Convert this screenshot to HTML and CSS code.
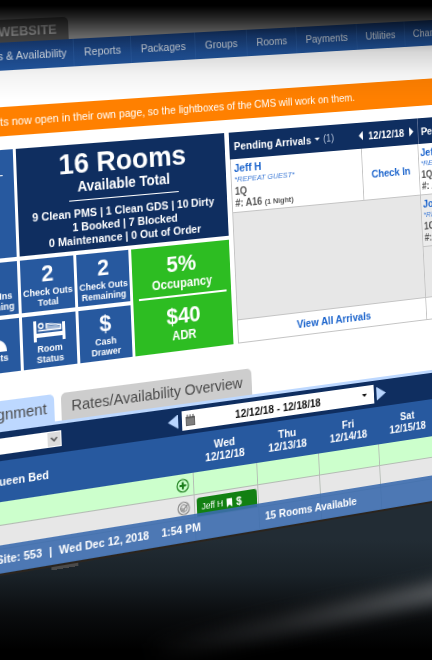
FILE: index.html
```html
<!DOCTYPE html>
<html lang="en">
<head>
<meta charset="utf-8">
<title>Property dashboard</title>
<link rel="stylesheet" href="styles.css">
</head>
<body>
<main class="stage">
  <div class="board">
    <div class="topbar"><a class="site-tab" href="#">WEBSITE</a></div>
    <nav class="nav">
      <a href="#">Rates &amp; Availability</a><a href="#">Reports</a><a href="#">Packages</a><a href="#">Groups</a><a href="#">Rooms</a><a href="#">Payments</a><a href="#">Utilities</a><a href="#">Channels</a>
    </nav>
    <p class="notice">Payments now open in their own page, so the lightboxes of the CMS will work on them.</p>

    <section class="panels">
      <div class="tiles">
        <div class="tile tile-side"><hr></div>
        <div class="tile summary">
          <h1>16 Rooms</h1>
          <h2>Available Total</h2>
          <hr>
          <p>9 Clean PMS | 1 Clean GDS | 10 Dirty<br>1 Booked | 7 Blocked<br>0 Maintenance | 0 Out of Order</p>
        </div>
        <div class="tile"><strong>2</strong><span>Check Ins<br>Remaining</span></div>
        <div class="tile"><strong>2</strong><span>Check Outs<br>Total</span></div>
        <div class="tile"><strong>2</strong><span>Check Outs<br>Remaining</span></div>
        <div class="tile rates">
          <strong>5%</strong><b>Occupancy</b>
          <hr>
          <strong>$40</strong><b>ADR</b>
        </div>
        <div class="tile guests">
          <svg class="icon-guest" viewBox="0 0 32 28" aria-hidden="true"><circle cx="16" cy="8" r="7"/><path d="M2 28c0-8 5-12 14-12s14 4 14 12z"/></svg>
          <span>Guests</span>
        </div>
        <div class="tile">
          <svg class="icon-bed" viewBox="0 0 32 20" aria-hidden="true"><path d="M0 0h3v12h26V3h3v17h-3v-4H3v4H0z"/><path d="M4.500 9.500h23V5.500L13 3.500V8" fill="none" stroke="#fff" stroke-width="1.400"/><path d="M13 5l14 1.500v3H13z" opacity=".55"/><circle cx="7.500" cy="5" r="2.300" fill="none" stroke="#fff" stroke-width="1.400"/></svg>
          <span>Room<br>Status</span>
        </div>
        <div class="tile"><strong>$</strong><span>Cash<br>Drawer</span></div>
      </div>

      <section class="list arrivals">
        <header>
          <h3>Pending Arrivals</h3><i class="caret"></i><span class="count">(1)</span>
          <button class="tri tri-left" aria-label="Previous day"></button>
          <time>12/12/18</time>
          <button class="tri tri-right" aria-label="Next day"></button>
        </header>
        <div class="entry">
          <div class="guest"><a href="#">Jeff H</a><em>*REPEAT GUEST*</em><b>1Q</b><b>#: A16 <small>(1 Night)</small></b></div>
          <a class="check" href="#">Check In</a>
        </div>
        <div class="empty"></div>
        <a class="all" href="#">View All Arrivals</a>
      </section>
      <section class="list departures">
        <header><h3>Pending Departures</h3></header>
        <div class="entry"><div class="guest"><a href="#">Jeff H</a><em>*REPEAT GUEST*</em><b>1Q</b><b>#: A16</b></div></div>
        <div class="entry alt"><div class="guest"><a href="#">John S</a><em>*REPEAT GUEST*</em><b>1Q</b><b>#: A12</b></div></div>
        <div class="empty"></div>
        <a class="all" href="#"></a>
      </section>
    </section>

    <div class="tabs">
      <button class="tab active">Assignment</button><button class="tab">Rates/Availability Overview</button>
    </div>
    <div class="toolbar">
      <div class="picker">
        <select class="filter" aria-label="Room filter"><option></option></select>
        <svg viewBox="0 0 13 13" aria-hidden="true"><path d="M0 0h13v13H0z" fill="#dcdcdc"/><path d="M3.500 5l3 3 3-3" fill="none" stroke="#444" stroke-width="1.300"/></svg>
      </div>
      <button class="tri big tri-left" aria-label="Previous week"></button>
      <button class="range">
        <svg viewBox="0 0 10 11" aria-hidden="true"><path d="M0 2h10v9H0z" fill="#666"/><path d="M2 0v3M5 0v3M8 0v3" stroke="#444"/><path d="M1 5h8M1 7h8M1 9h8" stroke="#bbb" stroke-width=".6"/></svg>
        <span>12/12/18 - 12/18/18</span><i class="caret"></i>
      </button>
      <button class="tri big tri-right" aria-label="Next week"></button>
    </div>
    <table class="calendar">
      <colgroup><col class="room"><col class="day"><col class="day"><col class="day"><col class="day"><col></colgroup>
      <thead>
        <tr><th>Queen Bed</th><th>Wed<br>12/12/18</th><th>Thu<br>12/13/18</th><th>Fri<br>12/14/18</th><th>Sat<br>12/15/18</th><th></th></tr>
      </thead>
      <tbody>
        <tr class="open">
          <td><svg class="mark" viewBox="0 0 14 14" aria-label="Add"><circle cx="7" cy="7" r="6" fill="none" stroke="#1b7d1b" stroke-width="1.200"/><path d="M7 3.500v7M3.500 7h7" stroke="#1b7d1b" stroke-width="2.200"/></svg></td>
          <td></td><td></td><td></td><td></td><td></td>
        </tr>
        <tr>
          <td><svg class="mark" viewBox="0 0 14 14" aria-label="Clean"><circle cx="7" cy="7" r="6" fill="none" stroke="#8a8a8a" stroke-width="1.200"/><circle cx="7" cy="7" r="3.500" fill="none" stroke="#8a8a8a"/><path d="M6 9l5-5M5 6v3h3" fill="none" stroke="#8a8a8a" stroke-width="1.200"/></svg></td>
          <td><a class="booking" href="#">Jeff H <svg viewBox="0 0 7 10" aria-hidden="true"><path d="M0 0h7v10L3.500 7 0 10z"/></svg><b>$</b></a></td>
          <td></td><td></td><td></td><td></td>
        </tr>
        <tr><td></td><td></td><td></td><td></td><td></td><td></td></tr>
      </tbody>
    </table>
    <footer class="status">
      <div class="where"><span>Site: 553</span><span>|</span><span>Wed Dec 12, 2018</span><time>1:54 PM</time></div>
      <span>15 Rooms Available</span>
    </footer>
    <div class="foot"></div>
  </div>
</main>
</body>
</html>
```
FILE: styles.css
```css
* { box-sizing: border-box; }

body {
  margin: 0;
  background: #000;
  font-family: "Liberation Sans", Arial, sans-serif;
  font-size: 11px;
  line-height: 12px;
}

h1, h2, h3, p { margin: 0; }
a { text-decoration: none; color: inherit; }
button, select { font: inherit; border: 0; padding: 0; margin: 0; }
hr { border: 0; margin: 0; background: #fff; }

.stage {
  position: relative;
  min-height: 100vh;
  overflow: hidden;
  background: linear-gradient(#222c34 0, #222c34 540px, #1a2228 575px, #0a0c0e 615px, #000 650px);
}

/* soft streak of light on the desk */
.stage::before {
  content: "";
  position: absolute;
  right: -50px;
  top: 608px;
  width: 340px;
  height: 20px;
  background: linear-gradient(90deg, transparent, #222426 40%, #666a6e);
  transform: rotate(-12deg);
  filter: blur(8px);
}

/* shade across the top */
.stage::after {
  content: "";
  position: absolute;
  inset: 0 0 auto 0;
  height: 100px;
  pointer-events: none;
  background: linear-gradient(#000 6px, rgba(0,0,0,.72) 20px, rgba(0,0,0,.36) 36px, rgba(0,0,0,.16) 52px, rgba(0,0,0,.05) 74px, transparent);
}

/* the screen, seen in perspective */
.board {
  position: relative;
  width: calc(100% + 120px);
  margin: -42px 0 0 -57px;
  transform-origin: 57px 42px;
  transform: matrix3d(.99655,-.043136,0,.00021723, .03762,1.03126,0,-.00003788, 0,0,1,0, 11.8,42.1,0,1);
}

.topbar {
  display: flex;
  align-items: flex-end;
  height: 42px;
  background: #a0a0a0;
}
.site-tab {
  width: 115px;
  height: 22px;
  padding-right: 12px;
  border-radius: 0 5px 0 0;
  background: #5a5a5a;
  color: #c4c4c4;
  font-size: 13px;
  font-weight: bold;
  line-height: 23px;
  text-align: right;
}

.nav {
  display: flex;
  height: 27px;
  padding-left: 3px;
  background: linear-gradient(#1d4a92, #2358a2);
  color: #e4ecf6;
  line-height: 27px;
  white-space: nowrap;
}
.nav a { padding: 0 10px; border-right: 1px solid #2a5ea8; }
.nav a:first-child { padding: 0 7px 0 16px; }

.notice {
  height: 63px;
  padding-left: 2px;
  border-top: 35px solid #fff;
  background: #ff8000;
  color: #fff;
  line-height: 28px;
  white-space: nowrap;
}

.panels {
  display: flex;
  height: 250px;
  padding: 13px 0 26px;
  background: #fff;
}
.tiles {
  display: grid;
  grid-template-columns: 54px 54px 54px 105px;
  grid-template-rows: 103px 50px 50px;
  gap: 4px 3px;
  margin-right: 5px;
}
.tile {
  display: flex;
  flex-direction: column;
  align-items: center;
  padding-top: 2px;
  background: #27599f;
  color: #fff;
  font-size: 9px;
  font-weight: bold;
  line-height: 10px;
  text-align: center;
  white-space: nowrap;
}
.tile strong { font-size: 22px; line-height: 25px; }
.tile svg { display: block; fill: #fff; }
.icon-bed { width: 32px; height: 20px; margin: 3px 0 2px; }
.icon-guest { width: 32px; height: 28px; margin-bottom: 1px; }
.tile-side { padding: 24px 11px 0; }
.tile-side hr { width: 100%; height: 1px; }
.summary {
  grid-column: 2 / 5;
  padding-top: 5px;
  background: #0f2e60;
  font-size: 11px;
  line-height: 13px;
}
.summary h1 { font-size: 28px; line-height: 28px; }
.summary h2 { font-size: 14px; line-height: 16px; }
.summary hr { width: 115px; height: 1px; margin: 5px 0 6px; }
.rates { grid-area: 2 / 4 / 4 / 5; padding-top: 6px; background: #2dbd22; }
.rates b { font-size: 12px; line-height: 14px; }
.rates hr { width: 94px; height: 2px; margin: 4px 0 6px; }

.list {
  display: flex;
  flex-direction: column;
  border: solid #c4c4c4;
  border-width: 0 1px 1px;
  color: #555;
}
.arrivals { flex: 0 0 217px; }
.departures { flex: 1 1 0; min-width: 0; overflow: hidden; border-left: 0; white-space: nowrap; }
.list header {
  display: flex;
  align-items: center;
  height: 27px;
  margin: 0 -1px;
  padding: 0 5px;
  background: #0f2e60;
  color: #fff;
}
.list.departures header { border-left: 1px solid #56698f; margin: 0; padding: 0 3px; }
.list h3, .list time { font-size: 11px; font-weight: bold; }
.count { margin-right: auto; font-size: 10px; color: #b9c6dc; }
.list time { margin: 0 6px; }

.caret {
  margin: 0 4px;
  border: solid transparent;
  border-width: 3px 3px 0;
  border-top-color: currentColor;
}
.tri { width: 5px; height: 10px; background: #fff; }
.tri-left { clip-path: polygon(100% 0, 100% 100%, 0 50%); }
.tri-right { clip-path: polygon(0 0, 100% 50%, 0 100%); }
.tri.big { width: 11px; height: 14px; background: #b9d6ff; }

.entry {
  display: flex;
  height: 54px;
  border-bottom: 1px solid #c4c4c4;
  background: #fff;
}
.entry.alt { background: #ececec; }
.guest { flex: 1; padding: 3px 3px 0; }
.departures .guest { padding-left: 2px; }
.guest > * { display: block; }
.guest a { color: #1a63cc; font-weight: bold; }
.guest em { color: #3d7ad6; font-size: 8px; }
.guest b { font-size: 10px; }
.guest small { font-size: 8px; }
.check {
  width: 67px;
  border-left: 1px solid #c4c4c4;
  color: #1a63cc;
  font-weight: bold;
  line-height: 54px;
  text-align: center;
}
.empty { flex: 1; background: #e7e7e7; }
.all {
  height: 23px;
  border-top: 1px solid #c4c4c4;
  color: #1a63cc;
  background: #fff;
  font-weight: bold;
  line-height: 22px;
  text-align: center;
}

.tabs {
  display: flex;
  gap: 7px;
  border-bottom: 3px solid #bdd8ff;
  background: #fff;
}
.tab {
  height: 26px;
  padding: 0 8px;
  border-radius: 5px 5px 0 0;
  background: #cdcdcd;
  color: #4a4a4a;
  font-size: 15px;
}
.tab:last-child { width: 201px; }
.tab.active { width: 86px; padding-left: 0; background: #bdd8ff; text-align: right; }

.toolbar {
  display: flex;
  align-items: center;
  height: 27px;
  background: #0f2e60;
}
.picker {
  display: flex;
  align-items: center;
  width: 92px;
  height: 15px;
  margin-right: auto;
  padding-right: 1px;
  background: #fff;
}
.filter { flex: 1; min-width: 0; height: 15px; appearance: none; background: #fff; }
.picker svg { width: 13px; height: 13px; }
.range {
  display: flex;
  align-items: center;
  width: 214px;
  height: 19px;
  margin: 0 3px 0 4px;
  padding: 0 4px;
  background: #fff;
  color: #111;
  font-weight: bold;
}
.range svg { width: 10px; height: 11px; }
.range span { flex: 1; }
.toolbar::after { content: ""; width: 107px; }

.calendar {
  width: 100%;
  table-layout: fixed;
  border-spacing: 0;
}
.room { width: 227px; }
.day { width: 69px; }
.calendar th {
  height: 38px;
  padding: 0;
  background: #27599f;
  color: #fff;
}
.calendar th:first-child { padding-left: 20px; text-align: left; }
.calendar td {
  height: 22px;
  padding: 0;
  border-right: 1px solid #b4bcb4;
  border-bottom: 1px solid #b4bcb4;
  background: #e7e7e7;
  vertical-align: top;
}
.calendar .open td { background: #ccffcc; }
.mark { display: block; width: 14px; height: 14px; margin: 4px 4px 0 auto; }
.booking {
  display: flex;
  align-items: center;
  gap: 4px;
  height: 18px;
  margin: 3px 1px 0 2px;
  padding-left: 5px;
  border-radius: 3px 3px 0 0;
  background: #128012;
  color: #fff;
  font-size: 9px;
}
.booking svg { width: 6px; height: 9px; fill: #fff; }
.booking b { font-size: 11px; }

.status {
  position: relative;
  display: flex;
  height: 26px;
  margin-top: -26px;
  padding-left: 23px;
  background: rgba(60, 108, 174, .9);
  box-shadow: 0 2px 0 #2a241e;
  color: #fff;
  font-weight: bold;
  line-height: 26px;
}
.where { display: flex; gap: 7px; width: 279px; }
.where time { margin-left: 6px; }
.foot { width: 27px; height: 5px; margin-left: 77px; background: #4a4a4a; }
```
